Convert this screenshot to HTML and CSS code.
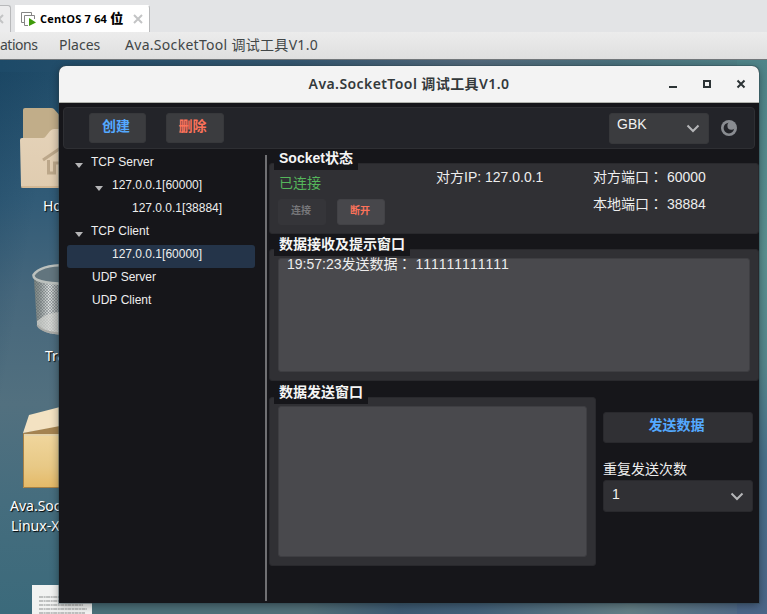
FILE: index.html
```html
<!DOCTYPE html>
<html lang="zh-CN">
<head>
<meta charset="utf-8">
<title>CentOS 7 64 位</title>
<link rel="stylesheet" href="styles.css">
</head>
<body>
<header class="tabs">
  <div class="tab tab-prev"><svg class="close" viewBox="0 0 10 10"><path d="M1 1l8 8M9 1l-8 8"/></svg></div>
  <div class="tab tab-active">
    <svg class="vm" viewBox="0 0 15 15"><path d="M3 10.500H.5V.5h10V3M3.500 13.500v-10h10V7M3.500 13.500H7" fill="none" stroke="#858585"/><path d="M8 6l7 4.500L8 14z" fill="#3f9b0b"/></svg>
    <span class="tab-name">CentOS 7 64 <b>位</b></span>
    <svg class="close" viewBox="0 0 10 10"><path d="M1 1l8 8M9 1l-8 8"/></svg>
  </div>
</header>
<nav class="menubar">
  <span class="m1">ations</span><span class="m2">Places</span><span class="m3">Ava.SocketTool 调试工具V1.0</span>
</nav>
<main class="desktop">
  <svg class="icon home" viewBox="0 0 60 82">
    <defs><linearGradient id="hg" x2="0" y2="1"><stop stop-color="#e4d2b8"/><stop offset="1" stop-color="#e0ccb0"/></linearGradient></defs>
    <path d="M3 2q0-2 2-2h26q2 0 3 1l8 9v30H3z" fill="#c1ad89"/>
    <path d="M0 32q0-2 2-2h21q2 0 3-2l4-5q2-2 4-2h26v59H3q-2 0-2-2z" fill="url(#hg)"/>
    <path d="M1 79h59" stroke="#c6a47b"/>
    <path d="M23 52l25-17M28.500 52v13h6v-10h9" fill="none" stroke="#bca78a" stroke-width="3"/>
  </svg>
  <span class="label l-home">Home</span>
  <svg class="icon trash" viewBox="0 0 58 74">
    <defs>
      <linearGradient id="tg" gradientUnits="userSpaceOnUse" x1="2" x2="33"><stop stop-color="#78837f"/><stop offset=".2" stop-color="#919998"/><stop offset=".5" stop-color="#dce0df"/><stop offset=".7" stop-color="#a9afaf"/><stop offset="1" stop-color="#777f82"/></linearGradient>
      <pattern id="mesh" width="3" height="3" patternUnits="userSpaceOnUse"><path d="M0 0l3 3M3 0L0 3" stroke="#5d666a" stroke-width=".4"/></pattern>
    </defs>
    <path d="M2 16l3 46q4 9 28 10V2z" fill="url(#tg)"/>
    <path d="M2 16l3 46q4 9 28 10V2z" fill="url(#mesh)"/>
    <path d="M5 58q8-8 28-10v23q-22 0-28-9z" fill="#d4d5d1" opacity=".7"/>
    <path d="M1 13Q7 2 33 2v18Q6 21 1 13z" fill="#62757e"/>
    <path d="M34 2Q8 2 1.500 12q-1 8 33 9" fill="none" stroke="#bcc1be" stroke-width="2.500"/>
    <path d="M5.500 62q4 8 28 9" fill="none" stroke="#a9aaa6" stroke-width="2"/>
  </svg>
  <span class="label l-trash">Trash</span>
  <svg class="icon box" viewBox="0 0 60 81">
    <defs><linearGradient id="bg" x2="0" y2="1"><stop stop-color="#f0d69d"/><stop offset=".6" stop-color="#e8c986"/><stop offset="1" stop-color="#e4b967"/></linearGradient></defs>
    <path d="M0 25l37-8v12H0z" fill="#a48351"/>
    <path d="M0 25L6 7 37-1v19z" fill="#f3e2c2"/>
    <path d="M0 26h60v54H0z" fill="url(#bg)"/>
    <path d="M0 27h60" stroke="#d9d1b9"/><path d="M.5 26v53.500H60" fill="none" stroke="#a78145"/>
  </svg>
  <span class="label l-box1">Ava.Socket</span>
  <span class="label l-box2">Linux-X64</span>
  <svg class="icon doc" viewBox="0 0 60 30"><path d="M0 0h60v30H0z" fill="#f1f2f1"/><path d="M7 12h48M7 16h46M7 20h44M7 24h48M7 28h46" stroke="#8b8e8e" stroke-dasharray="4 .6 2 .5"/></svg>

  <section class="window">
    <header class="titlebar">
      <h1>Ava.SocketTool 调试工具V1.0</h1>
      <div class="controls">
        <svg viewBox="0 0 10 10"><path d="M1 8h8" /></svg>
        <svg viewBox="0 0 10 10"><path d="M2 2h6v6H2z"/></svg>
        <svg viewBox="0 0 10 10"><path d="M1.500 1.500l7 7M8.500 1.500l-7 7"/></svg>
      </div>
    </header>
    <div class="client">
      <div class="toolbar">
        <button class="btn create">创建</button>
        <button class="btn delete">删除</button>
        <div class="select encoding"><span>GBK</span><svg class="chev" viewBox="0 0 14 9"><path d="M1.500 1.500L7 7l5.500-5.500"/></svg></div>
        <svg class="moon" viewBox="0 0 16 16"><circle cx="8" cy="8" r="8" fill="#898c91"/><circle cx="7.900" cy="8.100" r="5.300" fill="#232429"/><circle cx="10.400" cy="5.700" r="4" fill="#898c91"/></svg>
      </div>
      <div class="panes">
        <ul class="tree">
          <li class="d0"><i></i>TCP Server</li>
          <li class="d1"><i></i>127.0.0.1[60000]</li>
          <li class="d2">127.0.0.1[38884]</li>
          <li class="d0"><i></i>TCP Client</li>
          <li class="d1 leaf selected">127.0.0.1[60000]</li>
          <li class="root">UDP Server</li>
          <li class="root">UDP Client</li>
        </ul>
        <div class="splitter"></div>
        <div class="content">
          <section class="group status">
            <h2>Socket状态</h2>
            <div class="body">
              <div class="link">
                <span class="ok">已连接</span>
                <div class="actions"><button class="small off">连接</button><button class="small">断开</button></div>
              </div>
              <span class="ip">对方IP: 127.0.0.1</span>
              <div class="ports"><span>对方端口<span class="colon" lang="zh-TW">：</span> 60000</span><span>本地端口<span class="colon" lang="zh-TW">：</span> 38884</span></div>
            </div>
          </section>
          <section class="group receive">
            <h2>数据接收及提示窗口</h2>
            <div class="body"><div class="area">19:57:23发送数据<span class="colon" lang="zh-TW">：</span> 111111111111</div></div>
          </section>
          <div class="bottom">
            <section class="group send">
              <h2>数据发送窗口</h2>
              <div class="body"><div class="area"></div></div>
            </section>
            <div class="side">
              <button class="btn submit">发送数据</button>
              <span class="repeat">重复发送次数</span>
              <div class="select count"><span>1</span><svg class="chev" viewBox="0 0 14 9"><path d="M1.500 1.500L7 7l5.500-5.500"/></svg></div>
            </div>
          </div>
        </div>
      </div>
    </div>
  </section>
</main>
</body>
</html>
```

FILE: styles.css
```css
* { box-sizing: border-box; }
body {
  margin: 0;
  width: 767px;
  height: 614px;
  overflow: hidden;
  display: flex;
  flex-direction: column;
  white-space: nowrap;
  font: 14px/20px "Liberation Sans", "Noto Sans CJK SC", sans-serif;
  font-kerning: none;
}
h1, h2, ul { margin: 0; padding: 0; }
button { font: inherit; }

/* host tab strip */
.tabs { height: 32px; flex: none; background: #e3e4e6; display: flex; align-items: flex-end; }
.tab { height: 27px; display: flex; align-items: center; border: 1px solid #b8b9bb; border-bottom: 0; border-radius: 0 3px 0 0; }
.tab-prev { width: 11px; margin-right: 4px; border-left: 0; background: #ececed; }
.tab-prev .close { margin-left: -6px; }
.tab-active { width: 135px; background: #fff; border-left-color: #fff; border-top-color: #fff; padding-left: 5px; }
.vm { width: 15px; height: 15px; margin-right: 4px; }
.tab-name { width: 93px; font: bold 11px/20px "Open Sans", "Noto Sans CJK SC", sans-serif; letter-spacing: .2px; color: #000; }
.tab-name b { font-size: 13px; line-height: 1; }
.close { width: 10px; height: 10px; flex: none; fill: none; stroke: #c3c4c5; stroke-width: 2; }

/* guest menu bar */
.menubar {
  height: 28px; flex: none; display: flex; align-items: center;
  padding-bottom: 2px;
  background: linear-gradient(#ececec, #dfdfdf);
  border-bottom: 1px solid #72777a;
  color: #414647;
  font: 14px/20px "Noto Sans", "Noto Sans CJK SC", sans-serif;
}
.m1 { width: 59px; letter-spacing: -.5px; }
.m2 { width: 66px; }
.m3 { letter-spacing: .3px; }

.desktop {
  position: relative; flex: 1; overflow: hidden;
  background:
    linear-gradient(#4f8489, #5b9090 35%, #55868c 55%, #48708a 72%, #4b6587) right 0 top 0 / 30px 100% no-repeat,
    linear-gradient(90deg, #1d4a68, #34566f 38%, #52697b 62%, #4a707c 80%, #508388) 0 0 / 100% 12px no-repeat,
    linear-gradient(90deg, transparent 60px, #4a7079 90px, #527079 40%, #3e5b73 52%, #43617a 62%, #647f86 82%, #4b6587) 0 100% / 100% 14px no-repeat,
    linear-gradient(100deg, #0b355440, transparent 60px),
    linear-gradient(#1f4b68, #315b77 25%, #46677c 42%, #52707f 62%, #456d7e 80%, #3b6a7b);
}
.icon { position: absolute; }
.home { left: 20px; top: 48px; width: 60px; height: 82px; }
.trash { left: 32px; top: 203px; width: 58px; height: 74px; }
.box { left: 23px; top: 348px; width: 60px; height: 81px; overflow: visible; }
.doc { left: 32px; top: 525px; width: 60px; height: 30px; }
.label { position: absolute; color: #fff; font: 14px/20px "Noto Sans", sans-serif; text-shadow: 1px 1px 1px #000; }
.l-home { left: 43px; top: 136px; }
.l-trash { left: 45px; top: 286px; }
.l-box1 { left: 10px; top: 436px; }
.l-box2 { left: 11px; top: 456px; }

/* application window */
.window {
  position: absolute; left: 59px; top: 6px; width: 700px; height: 537px;
  display: flex; flex-direction: column;
  border-radius: 7px 7px 0 0;
  overflow: hidden;
  background: #16161a;
  box-shadow: 0 0 0 1px #30485366, 0 2px 8px #0006;
}
.titlebar { height: 37px; flex: none; background: #f3f3f3; border-bottom: 1px solid #b1b3ad; display: grid; grid-template-columns: 1fr; align-items: center; }
.titlebar > * { grid-area: 1 / 1; }
.titlebar h1 { text-align: center; font: 600 14px/20px "Noto Sans", "Noto Sans CJK SC", sans-serif; letter-spacing: .42px; color: #33393b; }
.controls { justify-self: end; display: flex; gap: 24px; padding-right: 13px; }
.controls svg { width: 10px; height: 10px; fill: none; stroke: #2c3335; stroke-width: 2; }

.client { flex: 1; padding: 4px 0 0; display: flex; flex-direction: column; }
.toolbar { height: 42px; margin: 0 4px; flex: none; display: flex; align-items: center; padding-left: 25px; border: 1px solid #2e2f33; border-radius: 4px; background: #232429; }
.btn { height: 30px; padding: 0 0 5px; border: 1px solid #37383b; border-radius: 3px; background: #3b3c3f; font-weight: bold; line-height: 22px; }
.create { width: 57px; color: #54a9ff; margin-right: 20px; padding-right: 3px; }
.delete { width: 58px; color: #fc725a; padding-right: 5px; }
.select { display: flex; justify-content: space-between; border: 1px solid #37383b; border-radius: 3px; color: #f1f1f1; padding: 0 8px 0 7px; }
.chev { width: 14px; height: 9px; fill: none; stroke: #b5b6b8; stroke-width: 2; }
.encoding { width: 100px; height: 31px; margin-left: auto; margin-right: 12px; background: #3b3c3f; }
.encoding .chev { margin-top: 10px; }
.moon { width: 16px; height: 16px; margin-right: 17px; }

.panes { flex: 1; display: flex; }
.tree { width: 196px; margin: 4px 10px 0 0; padding-left: 8px; list-style: none; font-size: 12px; line-height: 18px; color: #eee; }
.tree li { display: flex; height: 23px; border-radius: 3px; }
.tree i { width: 8px; height: 5px; margin: 10px 8px 0 0; background: #b5b5b7; clip-path: polygon(0 0, 100% 0, 50% 100%); }
.d0 { padding-left: 8px; }
.d1 { padding-left: 28px; }
.tree .d1 i { margin-right: 9px; }
.d2 { padding-left: 65px; }
.tree .leaf { padding-left: 45px; }
.root { padding-left: 25px; }
.tree .selected { background: #243449; }
.splitter { width: 2px; height: 446px; margin-top: 6px; background: #707073; }

.content { width: 492px; padding: 4px 0 0 2px; display: flex; flex-direction: column; }
.colon { font-family: "Noto Sans CJK TC", sans-serif; line-height: 0; }
.group { display: flex; flex-direction: column; }
.group h2 {
  position: relative;
  width: max-content; height: 17px; margin: 0 0 -7px 5px; padding: 0 5px;
  background: #16161a; color: #f5f5f5; font-size: 14px; line-height: 10px;
}
.body { flex: 1; border: 1px solid #29292d; border-radius: 3px; background: #303034; padding: 8px; color: #ededed; }
.status { height: 81px; margin-bottom: 5px; }
.status .body { display: flex; padding: 0 8px; line-height: 18px; }
.link { width: 158px; padding-top: 10px; color: #55b65b; display: flex; flex-direction: column; }
.ok { padding-left: 1px; }
.actions { display: flex; gap: 10px; margin-top: 7px; }
.small { width: 48px; height: 26px; padding: 0 2px 3px 0; border: 1px solid #424246; border-radius: 3px; background: #47474b; color: #fc725a; font-size: 10px; font-weight: bold; line-height: 16px; }
.small + .small { margin-left: 1px; }
.off { background: #353539; border-color: #353539; color: #77777a; }
.ip { width: 157px; padding-top: 4px; }
.ports { padding-top: 4px; display: flex; flex-direction: column; gap: 9px; }
.receive { height: 142px; margin-bottom: 6px; }
.area { height: 100%; border: 1px solid #3e3e42; border-radius: 3px; background: #49494d; padding-left: 8px; line-height: 11px; }
.bottom { display: flex; gap: 7px; }
.send { width: 327px; height: 179px; }
.side { width: 150px; padding-top: 25px; display: flex; flex-direction: column; }
.submit { width: 150px; height: 31px; color: #54a9ff; background: #303034; border-color: #29292d; padding-right: 3px; padding-bottom: 6px; }
.repeat { margin-top: 16px; height: 21px; color: #ededed; }
.count { height: 32px; background: #303034; border-color: #29292d; line-height: 26px; padding-left: 8px; }
.count .chev { margin-top: 11px; }
```
